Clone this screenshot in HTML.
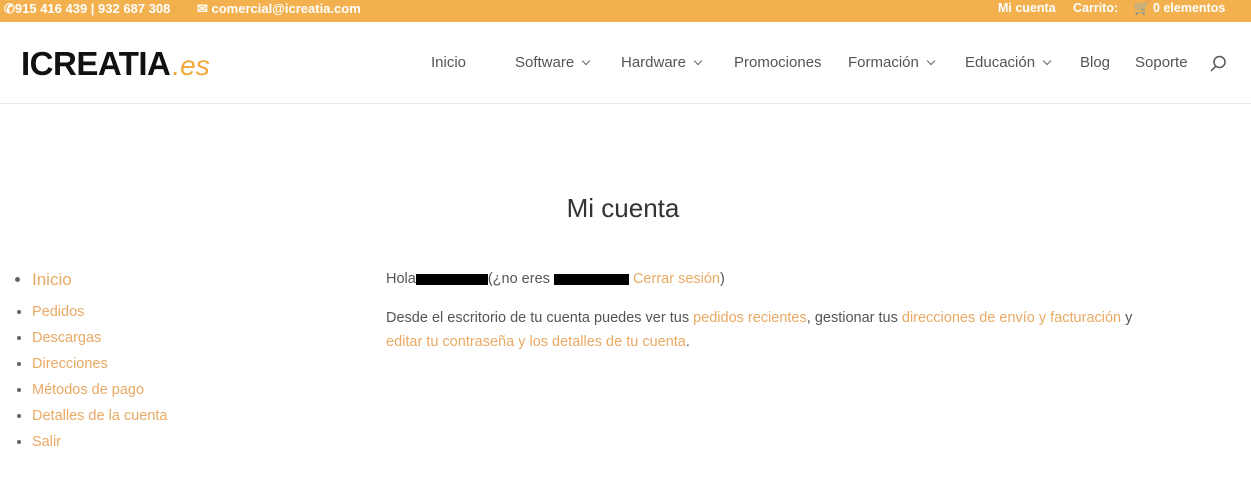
<!DOCTYPE html>
<html><head><meta charset="utf-8"><style>
body{margin:0;width:1251px;height:493px;overflow:hidden;background:#fff;font-family:"Liberation Sans",sans-serif;color:#666;position:relative}
.top{position:absolute;left:0;top:0;width:1251px;height:22px;background:#f3b04e;color:#fff;font-size:13px;font-weight:bold}
.top span{position:absolute;top:1px}
.top .r{font-size:12.5px}
.hdr{position:absolute;top:22px;left:0;width:1251px;height:81px;border-bottom:1px solid #e8e8e8}
.logo{position:absolute;left:21px;top:23px;font-size:33px;font-weight:bold;color:#111;letter-spacing:-0.5px}
.logo i{color:#f3a83b;font-weight:normal;font-size:28px;letter-spacing:0;margin-left:2px}
.nav{position:absolute;top:32px;font-size:15px;color:#555}
.chev{display:inline-block;width:5px;height:5px;border-right:1.5px solid #666;border-bottom:1.5px solid #666;transform:rotate(45deg);margin-left:9px;position:relative;top:-3px}
h1{position:absolute;top:193px;left:0;width:1246px;text-align:center;font-weight:normal;font-size:26px;color:#333;margin:0}
ul{position:absolute;left:14px;top:267px;margin:0;padding:0 0 0 18px;font-size:14.5px;color:#f0b26b}
li{height:26px;line-height:26px;color:#666}
li span{color:#eaa963}
a{color:#eaa963}
.p{position:absolute;left:386px;font-size:14.5px;color:#555}
.bl{display:inline-block;background:#000;height:11px;vertical-align:middle}
</style></head><body>
<div class="top"><span style="left:4px">&#9990;915 416 439 | 932 687 308</span><span style="left:197px">&#9993; comercial@icreatia.com</span><span class="r" style="left:998px">Mi cuenta</span><span class="r" style="left:1073px">Carrito:</span><span class="r" style="left:1134px">&#128722;&nbsp;0 elementos</span></div>
<div class="hdr">
<div class="logo">ICREATIA<i>.es</i></div>
<div class="nav" style="left:431px">Inicio</div>
<div class="nav" style="left:515px">Software<span class="chev"></span></div>
<div class="nav" style="left:621px">Hardware<span class="chev"></span></div>
<div class="nav" style="left:734px">Promociones</div>
<div class="nav" style="left:848px">Formación<span class="chev"></span></div>
<div class="nav" style="left:965px">Educación<span class="chev"></span></div>
<div class="nav" style="left:1080px">Blog</div>
<div class="nav" style="left:1135px">Soporte</div>
<svg style="position:absolute;left:1209px;top:33px" width="18" height="18"><circle cx="10.5" cy="7" r="5.5" fill="none" stroke="#555" stroke-width="1.5"/><line x1="7" y1="11" x2="2" y2="16" stroke="#555" stroke-width="1.5"/></svg>
</div>
<h1>Mi cuenta</h1>
<ul>
<li style="font-size:17px;height:32px;line-height:26px"><span>Inicio</span></li>
<li><span>Pedidos</span></li><li><span>Descargas</span></li><li><span>Direcciones</span></li><li><span>Métodos de pago</span></li><li><span>Detalles de la cuenta</span></li><li><span>Salir</span></li>
</ul>
<div class="p" style="top:271px">Hola<span class="bl" style="width:72px"></span>(¿no eres <span class="bl" style="width:75px"></span> <a>Cerrar sesión</a>)</div>
<div class="p" style="top:306px;line-height:24px;width:800px">Desde el escritorio de tu cuenta puedes ver tus <a>pedidos recientes</a>, gestionar tus <a>direcciones de envío y facturación</a> y<br><a>editar tu contraseña y los detalles de tu cuenta</a>.</div>
</body></html>
